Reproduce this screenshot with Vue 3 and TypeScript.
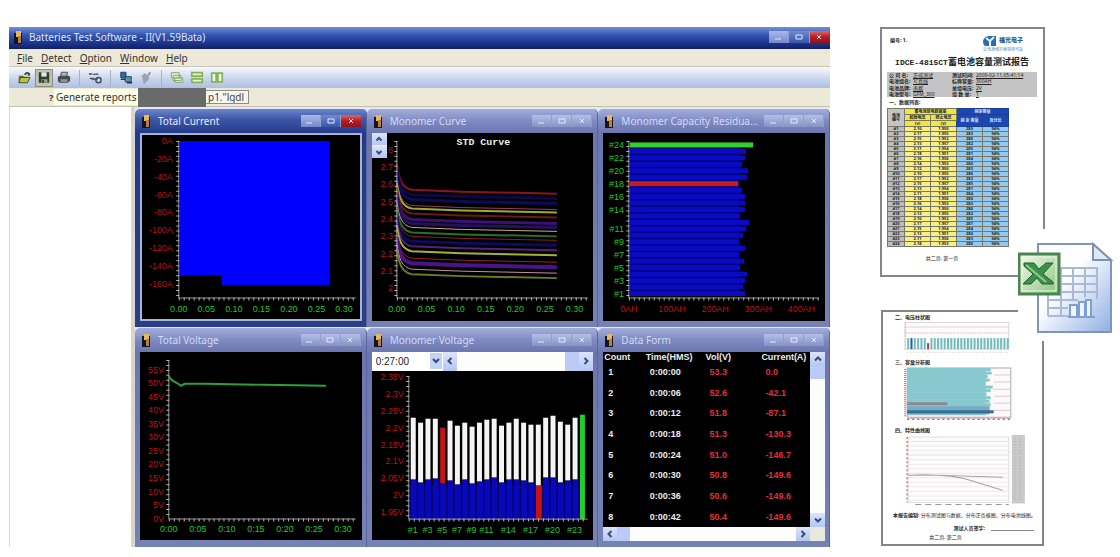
<script setup lang="ts">
import { ref } from 'vue'

type ChildWindow = { id: string; title: string; active?: boolean }

const menus = ['File', 'Detect', 'Option', 'Window', 'Help']

const windows: ChildWindow[] = [
  { id: 'current', title: 'Total Current', active: true },
  { id: 'curve', title: 'Monomer Curve' },
  { id: 'capacity', title: 'Monomer Capacity Residua...' },
  { id: 'total', title: 'Total Voltage' },
  { id: 'monomer', title: 'Monomer Voltage' },
  { id: 'data', title: 'Data Form' },
]

const fileName = ref('p1."lgdl')
const time = ref('0:27:00')

const hours = ['0.00', '0.05', '0.10', '0.15', '0.20', '0.25', '0.30']
const clock = ['0:00', '0:05', '0:10', '0:15', '0:20', '0:25', '0:30']
const amps = ['0A', '-20A', '-40A', '-60A', '-80A', '-100A', '-120A', '-140A', '-160A']
const cellVolts = ['2.8', '2.7', '2.6', '2.5', '2.4', '2.3', '2.2', '2.1', '2']
const totalVolts = ['55V', '50V', '45V', '40V', '35V', '30V', '25V', '20V', '15V', '10V', '5V', '0V']
const monoVolts = ['2.35V', '2.3V', '2.25V', '2.2V', '2.15V', '2.1V', '2.05V', '2V', '1.95V']

const curves = [
  { end: 61, color: '#8c1420', w: 2 },
  { end: 66, color: '#0c0848', w: 3 },
  { end: 71, color: '#0e0a58', w: 3 },
  { end: 77, color: '#93405a', w: 1 },
  { end: 80, color: '#a3a832', w: 2 },
  { end: 85, color: '#6c1a10', w: 2 },
  { end: 91, color: '#3b1272', w: 3 },
  { end: 95, color: '#26105e', w: 3 },
  { end: 99, color: '#c9a884', w: 1 },
  { end: 104, color: '#2c6f28', w: 2 },
  { end: 108, color: '#8a1c30', w: 1 },
  { end: 113, color: '#0e0a5c', w: 3 },
  { end: 118, color: '#572078', w: 2 },
  { end: 123, color: '#a4b03c', w: 2 },
  { end: 130, color: '#98203a', w: 1 },
  { end: 135, color: '#4a1488', w: 4 },
  { end: 141, color: '#c890a0', w: 1 },
  { end: 146, color: '#6c7c1c', w: 2 },
]
const curvePath = (e: number) => `M25 ${e - 30} C27 ${e - 14} 30 ${e - 6} 40 ${e - 4} L90 ${e - 2} L186 ${e}`

const capacity = [143, 141, 143, 145, 138, 142, 137, 143, 137, 141, 144, 147, 138, 143, 143, 143, 140, 136, 145, 146, 140, 143, 144, 151]
const capacityLabels = [24, 22, 20, 18, 16, 14, 11, 9, 7, 5, 3, 1]
const capacityY = (n: number) => 12 + (24 - n) * 6.5
const capacityColor = (n: number) => (n === 24 ? '#2fd02f' : n === 18 ? '#c41c24' : '#0a0ac4')

const tops = [47, 52, 48, 48, 57, 50, 55, 52, 56, 52, 49, 48, 55, 52, 48, 52, 54, 54, 47, 45, 51, 54, 47, 44]
const mids = [109, 112, 109, 108, 113, 110, 114, 109, 113, 111, 109, 107, 112, 109, 109, 110, 112, 115, 107, 107, 112, 110, 109, 149]
const barX = (i: number) => 39 + i * 7.4
const topColor = (i: number) => (i === 4 ? '#c41414' : i === 23 ? '#22d022' : '#f4f4f4')
const voltLabels = [1, 3, 5, 7, 9, 11, 14, 17, 20, 23]

const rows = [
  ['1', '0:00:00', '53.3', '0.0'],
  ['2', '0:00:06', '52.6', '-42.1'],
  ['3', '0:00:12', '51.8', '-87.1'],
  ['4', '0:00:18', '51.3', '-130.3'],
  ['5', '0:00:24', '51.0', '-146.7'],
  ['6', '0:00:30', '50.8', '-149.6'],
  ['7', '0:00:36', '50.6', '-149.6'],
  ['8', '0:00:42', '50.4', '-149.6'],
]

const meta = [
  ['公 司 名:', '正威测试', '测试时间:', '2009-02-11,05:41:14'],
  ['电池组名:', '写真线', '标称容量:', '300AH'],
  ['电池品牌:', '南都', '单组电压:', '2V'],
  ['电池型号:', 'GFM_300', '组 数 单:', '1'],
]
const reportRows = Array.from({ length: 24 }, (_, i) => [
  '#' + (i + 1),
  (2.1 + ((i * 7) % 9) / 100).toFixed(2),
  (1.95 + ((i * 5) % 8) / 1000).toFixed(3),
  String(280 + ((i * 3) % 7)),
  94 + ((i * 5) % 5) + '%',
])
const smallBars = Array.from({ length: 31 }, (_, i) => i)
const flatBars = [107, 108, 104, 106, 102, 109, 107, 103, 107, 106, 107, 104, 101]
</script>

<template>
  <main class="page">
    <section class="app">
      <header class="titlebar">
        <svg class="bat" viewBox="0 0 10 14"><rect x="1" y="3" width="8" height="11" fill="#15151f" /><rect x="3" y="1" width="5" height="6" fill="#e8b560" /><rect x="5" y="6" width="3" height="7" fill="#b8803c" /></svg>
        <h1>Batteries Test Software - II(V1.59Bata)</h1>
        <div class="winbtns hot">
          <button aria-label="Minimize"><svg viewBox="0 0 12 10"><path d="M2 7h6" /></svg></button>
          <button aria-label="Restore"><svg viewBox="0 0 12 10"><path d="M3 3h6v4H3z" /></svg></button>
          <button aria-label="Close" class="close"><svg viewBox="0 0 12 10"><path d="M4 3l4 4M8 3l-4 4" /></svg></button>
        </div>
      </header>
      <nav class="menubar">
        <button v-for="m in menus" :key="m"><u>{{ m[0] }}</u>{{ m.slice(1) }}</button>
      </nav>
      <div class="toolbar">
        <button aria-label="Open"><svg viewBox="0 0 16 14"><path d="M2 5h5l1 1h4v6H2z" fill="#6a7a20" /><path d="M4 7h11l-3 6H2z" fill="#b9c24a" stroke="#3c4a10" /><path d="M9 4c1-3 4-3 5-1l-1 2" fill="none" stroke="#28501c" stroke-width="2" /></svg></button>
        <button aria-label="Save" class="pressed"><svg viewBox="0 0 16 14"><path d="M2 1h12v12H2z" fill="#2f3f35" /><path d="M5 1h6v5H5z" fill="#e8ead8" /><path d="M5 9h7v4H5z" fill="#8fa08c" /><path d="M6 10h2v3H6z" fill="#222" /></svg></button>
        <button aria-label="Print"><svg viewBox="0 0 16 14"><path d="M5 1h7l-1 5H4z" fill="#aeb4b8" stroke="#444" /><path d="M1 6l3-1h9l2 1v5l-3 2H3l-2-2z" fill="#474b50" /><path d="M4 9h8v3H4z" fill="#8e949a" /></svg></button>
        <i class="sep" />
        <button aria-label="Settings"><svg viewBox="0 0 16 14"><path d="M1 3h4M6 4c2-2 4 0 6-1M2 8h5" fill="none" stroke="#4b4f5c" stroke-width="1.5" /><path d="M4 9h7" stroke="#48607c" stroke-width="2" /><circle cx="12" cy="10" r="3" fill="none" stroke="#3f4654" stroke-width="1.5" /></svg></button>
        <i class="sep" />
        <button aria-label="Download"><svg viewBox="0 0 16 14"><path d="M2 1h6v6H2z" fill="#2c6d9c" stroke="#1c3e64" /><path d="M7 6h7v6H7z" fill="#4f97a8" stroke="#1c3e64" /><path d="M2 9h5M9 13h6" stroke="#234" stroke-width="1.5" /></svg></button>
        <button aria-label="Connect"><svg viewBox="0 0 16 14"><path d="M3 5l4-3 5 5-3 5-4-1z" fill="#9aa2ac" /><path d="M10 5l3-4M5 12l2 1" stroke="#8891a0" stroke-width="2" /></svg></button>
        <i class="sep" />
        <button aria-label="Cascade"><svg viewBox="0 0 16 14" fill="#e6f0dc" stroke="#7aa35e"><path d="M1.500 1.500h9v6h-9zM3.500 4.500h9v6h-9zM5.500 7.500h9v5h-9z" /></svg></button>
        <button aria-label="Tile rows"><svg viewBox="0 0 16 14" fill="#e8f3da" stroke="#86b25a"><path d="M2 1.500h12v4H2zM2 8.500h12v4H2z" stroke-width="2" /></svg></button>
        <button aria-label="Tile columns"><svg viewBox="0 0 16 14" fill="#eef6e4" stroke="#86b25a"><path d="M2 2h5v10H2zM9 2h5v10H9z" stroke-width="2" /></svg></button>
      </div>
      <div class="infobar">
        <b>?</b><span class="tip">Generate reports</span><span class="mask" />
        <input v-model="fileName" aria-label="File" />
      </div>
      <div class="work">
        <aside class="tree" />
        <div class="mdi">
          <article v-for="w in windows" :key="w.id" class="child" :class="{ active: w.active }">
            <header>
              <svg class="bat" viewBox="0 0 10 14"><rect x="1" y="3" width="8" height="11" fill="#15151f" /><rect x="3" y="1" width="5" height="6" fill="#e8b560" /><rect x="5" y="6" width="3" height="7" fill="#b8803c" /></svg>
              <h2>{{ w.title }}</h2>
              <div class="winbtns" :class="{ hot: w.active }">
                <button aria-label="Minimize"><svg viewBox="0 0 12 10"><path d="M2 7h6" /></svg></button>
                <button aria-label="Maximize"><svg viewBox="0 0 12 10"><path d="M3 3h6v4H3z" /></svg></button>
                <button aria-label="Close" class="close"><svg viewBox="0 0 12 10"><path d="M4 3l4 4M8 3l-4 4" /></svg></button>
              </div>
            </header>
            <div class="body">
              <svg v-if="w.id === 'current'" class="chart" viewBox="0 0 223 189">
                <path d="M40 8H191V153H82V143H40z" fill="#0000ff" />
                <path d="M39 8V166H217" class="axis" /><path d="M38 8V166" class="ticks" /><path d="M39 167H217" class="ticks" />
                <g class="red end"><text v-for="(t, i) in amps" :key="t" x="33" :y="11 + i * 18">{{ t }}</text></g>
                <g class="green mid"><text v-for="(t, i) in hours" :key="t" :x="39 + i * 27.700" y="180">{{ t }}</text></g>
              </svg>

              <template v-else-if="w.id === 'curve'">
                <svg class="chart" viewBox="0 0 223 189">
                  <path v-for="c in curves" :key="c.end" :d="curvePath(c.end)" fill="none" :stroke="c.color" :stroke-width="c.w" />
                  <path d="M25 8V166H217" class="axis" /><path d="M24 8V166" class="ticks" /><path d="M25 167H217" class="ticks" />
                  <text x="112" y="12" class="charttitle">STD Curve</text>
                  <g class="red end"><text v-for="(t, i) in cellVolts" :key="t" x="21" :y="20 + i * 17.400">{{ t }}</text></g>
                  <g class="green mid"><text v-for="(t, i) in hours" :key="t" :x="25 + i * 29.800" y="180">{{ t }}</text></g>
                </svg>
                <div class="spin">
                  <button aria-label="Up"><svg viewBox="0 0 8 8"><path d="M1.500 5.500L4 3l2.500 2.500" /></svg></button>
                  <button aria-label="Down"><svg viewBox="0 0 8 8"><path d="M1.500 3L4 5.500 6.500 3" /></svg></button>
                </div>
              </template>

              <svg v-else-if="w.id === 'capacity'" class="chart" viewBox="0 0 223 189">
                <rect x="27" y="14" width="110" height="150" fill="#04047c" />
                <rect v-for="(c, i) in capacity" :key="i" x="27" :y="capacityY(i + 1) - 2.500" :width="c - 27" height="5" :fill="capacityColor(i + 1)" />
                <path d="M26 8V166H217" class="axis" /><path d="M25 8V166" class="ticks" /><path d="M26 167H217" class="ticks" />
                <g class="green end"><text v-for="n in capacityLabels" :key="n" x="21" :y="capacityY(n) + 3">#{{ n }}</text></g>
                <g class="red mid"><text v-for="n in 5" :key="n" :x="26 + (n - 1) * 43.400" y="180">{{ n > 1 ? (n - 1) * 100 : 0 }}AH</text></g>
              </svg>

              <svg v-else-if="w.id === 'total'" class="chart" viewBox="0 0 223 189">
                <path d="M29 8V168H217" class="axis" /><path d="M28 8V168" class="ticks" /><path d="M29 169H217" class="ticks" />
                <path d="M29 24C31 30 35 29 41 34L45 32H65L125 33L187 34" fill="none" stroke="#2f9f38" stroke-width="2" />
                <g class="red end"><text v-for="(t, i) in totalVolts" :key="t" x="24" :y="21 + i * 13.600">{{ t }}</text></g>
                <g class="green mid"><text v-for="(t, i) in clock" :key="t" :x="29 + i * 29.200" y="181">{{ t }}</text></g>
              </svg>

              <template v-else-if="w.id === 'monomer'">
                <div class="timebar">
                  <div class="timesel">
                    <select v-model="time" aria-label="Time"><option>0:27:00</option></select>
                    <svg viewBox="0 0 12 16"><path d="M3 6l3 3 3-3" /></svg>
                  </div>
                  <button class="sb" aria-label="Back"><svg viewBox="0 0 8 8"><path d="M5.500 1L2.500 4l3 3" /></svg></button>
                  <span class="track"><i class="thumb" /></span>
                  <button class="sb" aria-label="Forward"><svg viewBox="0 0 8 8"><path d="M2.500 1l3 3-3 3" /></svg></button>
                </div>
                <svg class="chart" viewBox="0 0 223 170">
                  <rect x="38" y="115" width="170" height="34" fill="#05056c" />
                  <g v-for="(t, i) in tops" :key="i">
                    <rect :x="barX(i)" :y="mids[i]" width="6" :height="149 - mids[i]" :fill="i === 17 ? '#c41414' : '#0808b8'" />
                    <rect :x="barX(i)" :y="t" width="5" :height="mids[i] - t" :fill="topColor(i)" />
                  </g>
                  <path d="M37 5V149H217" class="axis" /><path d="M36 5V149" class="ticks" /><path d="M37 150H217" class="ticks" />
                  <g class="red end"><text v-for="(v, i) in monoVolts" :key="v" x="32" :y="9 + i * 17">{{ v }}</text></g>
                  <g class="green mid"><text v-for="n in voltLabels" :key="n" :x="barX(n - 1) + 2" y="163">#{{ n }}</text></g>
                </svg>
              </template>

              <div v-else class="datagrid">
                <table>
                  <thead><tr><th>Count</th><th>Time(HMS)</th><th>Vol(V)</th><th>Current(A)</th></tr></thead>
                  <tbody><tr v-for="r in rows" :key="r[0]"><td v-for="(c, i) in r" :key="i">{{ c }}</td></tr></tbody>
                </table>
                <div class="vbar">
                  <button class="sb" aria-label="Scroll up"><svg viewBox="0 0 8 8"><path d="M1 5.500l3-3 3 3" /></svg></button>
                  <span class="track"><i class="thumb" /></span>
                  <button class="sb" aria-label="Scroll down"><svg viewBox="0 0 8 8"><path d="M1 2.500l3 3 3-3" /></svg></button>
                </div>
                <div class="hbar">
                  <button class="sb" aria-label="Scroll left"><svg viewBox="0 0 8 8"><path d="M5.500 1L2.500 4l3 3" /></svg></button>
                  <span class="track"><i class="thumb" /></span>
                  <button class="sb" aria-label="Scroll right"><svg viewBox="0 0 8 8"><path d="M2.500 1l3 3-3 3" /></svg></button>
                </div>
                <i class="corner" />
              </div>
            </div>
          </article>
        </div>
      </div>
    </section>

    <aside class="reports">
      <article class="sheet first">
        <div class="sheethead">
          <span>编号: 1.</span>
          <div class="brand">
            <svg viewBox="0 0 14 12"><path d="M0 6C1 2 4 1 7 1h6v10H3C1 11 0 9 0 6z" fill="#2a6cae" /><path d="M3 3l4 3 4-4M7 6v5" fill="none" stroke="#e8f4fc" stroke-width="2" /></svg>
            <b>福光电子</b>
            <small>让电源维护更简单可靠</small>
          </div>
        </div>
        <h3><span>IDCE-4815CT</span>蓄电池容量测试报告</h3>
        <dl>
          <template v-for="m in meta" :key="m[0]"><dt>{{ m[0] }}</dt><dd>{{ m[1] }}</dd><dt>{{ m[2] }}</dt><dd>{{ m[3] }}</dd></template>
        </dl>
        <h4>一、数据列表:</h4>
        <table>
          <thead>
            <tr><th rowspan="3">电池<br>编号</th><th colspan="2">蓄电池放电数据单</th><th colspan="2">剩余容量</th></tr>
            <tr><th>起始电压</th><th>终止电压</th><th rowspan="2">剩 余 容量</th><th rowspan="2">百分比</th></tr>
            <tr><th>(V)</th><th>(V)</th></tr>
          </thead>
          <tbody><tr v-for="r in reportRows" :key="r[0]"><td v-for="(c, i) in r" :key="i">{{ c }}</td></tr></tbody>
        </table>
        <p class="pageno">共二页, 第一页</p>
      </article>

      <svg class="excel" viewBox="0 0 102 112">
        <defs>
          <linearGradient id="paper" x1="0" y1="0" x2="1" y2="1"><stop offset="0.400" stop-color="#fdfeff" /><stop offset="1" stop-color="#8fb0e4" /></linearGradient>
          <linearGradient id="badge" x1="0" y1="0" x2="1" y2="1"><stop offset="0" stop-color="#f3faee" /><stop offset="1" stop-color="#8cc47c" /></linearGradient>
        </defs>
        <path d="M20 15H75L93 32V103H20z" fill="url(#paper)" stroke="#7f95bd" stroke-width="2" />
        <path d="M75 15V31H93z" fill="#dfe8f6" stroke="#7f8fae" stroke-width="2" />
        <path d="M30 39H79V70M30 47H79M30 55H79M30 63H79M30 71H60M30 79H50M30 87H52M30 39V87M43 39V87M55 39V71M67 39V68" fill="none" stroke="#a9b9d6" stroke-width="2" />
        <path d="M52 88V76h7v12M61 88V73h6v15M68 88V71h5v17M50 88h27" fill="#eef5ff" stroke="#7f9fd4" stroke-width="2" />
        <rect x="1" y="25" width="40" height="40" fill="url(#badge)" stroke="#4b8450" stroke-width="3" />
        <rect x="4" y="28" width="34" height="34" fill="none" stroke="#eaf6e4" />
        <path d="M6 34H16L21 40L28 34H35L25 45L35 53V55H24L19 49L13 55H5L15 45L6 37z" fill="#3b9148" stroke="#245c34" />
        <path d="M8 36l20 17" stroke="#90cc84" stroke-width="2" />
      </svg>

      <article class="sheet second">
        <h4>二、电压柱状图</h4>
        <svg viewBox="0 0 158 35">
          <path d="M22 0.500H125V27H22zM22 5H125" fill="#fdfcfc" stroke="#ddd5d8" /><path d="M22 11H125M22 1V28" stroke="#e9b6c0" fill="none" stroke-dasharray="2 1" />
          <rect v-for="i in smallBars" :key="i" :x="24 + i * 3.300" :y="i === 6 ? 21 : 16" width="2" :height="i === 6 ? 6 : 11" :fill="i === 6 ? '#b43850' : i === 1 ? '#2757a8' : '#74bcbc'" />
          <path d="M24 30H125" stroke="#bbb" stroke-dasharray="1 2" />
        </svg>
        <h4>三、容量分析图</h4>
        <svg viewBox="0 0 158 57">
          <path d="M24 1H127V50H24z" fill="#fdfafb" stroke="#aaa" /><path d="M110 8h17M110 15h17M110 22h17M110 29h17M110 36h17M110 43h17" stroke="#e4c8d0" />
          <rect x="24" y="2" width="78" height="46" fill="#92cdd2" />
          <rect v-for="(b, i) in flatBars" :key="i" x="24" :y="1 + i * 3.500" :width="b - 24" height="3" fill="#86c8ce" />
          <rect x="24" y="35" width="40" height="3" fill="#8b8b8f" /><rect x="24" y="39" width="82" height="8" fill="#76abc8" /><rect x="24" y="43" width="86" height="3" fill="#356f92" />
          <path d="M22 2V49" stroke="#d26a80" stroke-width="2" stroke-dasharray="1 1" /><path d="M24 51H127" stroke="#e2a8b4" /><path d="M24 52H129" stroke="#555" stroke-dasharray="2 3" />
        </svg>
        <h4>四、特性曲线图</h4>
        <svg viewBox="0 0 158 75">
          <path d="M25 2H125V67H25z" fill="#fdfcfc" stroke="#ddd" /><path v-for="n in 14" :key="n" :d="`M25 ${2 + n * 4.500}H125`" stroke="#efe6e8" />
          <path d="M25 40H55L119 42M25 40Q65 38 90 46T119 55" fill="none" stroke="#aaa0a4" /><path d="M24 2V67" stroke="#dc94a4" stroke-width="2" stroke-dasharray="2 2" /><path d="M32 69H125" stroke="#999" stroke-dasharray="6 4" />
          <rect x="128" width="13" height="68" fill="#c9c9c9" /><path d="M131 3V66M136 3V66" stroke="#aaa" stroke-dasharray="1 2" />
        </svg>
        <p class="note"><b>本报告编制:</b> 分布测试图与数据、分布正负极图、分布电池线图。</p>
        <p class="sign">测试人员签字: <i /></p>
        <p class="pageno">共二页, 第二页</p>
      </article>
    </aside>
  </main>
</template>

<style>
body { margin: 0; background: #fff; }
</style>

<style scoped>
* { box-sizing: border-box; }
button { padding: 0; border: 0; background: none; font: inherit; color: inherit; }
h1, h2, h3, h4, p, dl, dd { margin: 0; font-weight: normal; }
svg { display: block; }
.page { display: flex; align-items: flex-start; padding: 27px 0 8px 9px; font-family: "Noto Sans", "Noto Sans CJK SC", sans-serif; font-size: 10px; }
.app { flex: 1; min-width: 0; background: #ece9d8; }
.titlebar { display: flex; align-items: center; height: 22px; padding: 0 1px 2px 4px; gap: 6px; color: #dfe6f8; background: linear-gradient(#7391d6, #3656b4 35%, #213c96 65%, #101f66); }
.titlebar h1, .child h2 { flex: 1; min-width: 0; font-size: 10px; line-height: 16px; white-space: nowrap; }
.bat { width: 10px; height: 14px; flex: none; }
.winbtns { display: flex; flex: none; width: 60px; height: 12px; background: linear-gradient(#b4bfe6, #8691c6); }
.winbtns button { flex: 1; border-right: 1px solid #929ccd; }
.winbtns svg { width: 12px; height: 10px; margin: auto; fill: none; stroke: #e4e9fa; stroke-width: 1; }
.winbtns.hot { background: linear-gradient(#6f8ad0, #3655ac); }
.winbtns.hot button:first-child { background: linear-gradient(#a8b9e8, #7388cc); }
.winbtns.hot .close { background: linear-gradient(#d86a6a, #b81c20 50%, #8c1420); border: 0; }
.menubar { display: flex; gap: 8px; height: 17px; padding-left: 8px; color: #333; }
.toolbar { display: flex; align-items: center; height: 22px; padding: 0 7px; gap: 4px; border-top: 1px solid #c9c6ba; background: linear-gradient(#f8f9fb, #c6d3ec 60%, #aebfe2); }
.toolbar button { width: 16px; height: 16px; display: grid; place-items: center; }
.toolbar svg { width: 14px; height: 13px; }
.toolbar .pressed { background: #c2c4b0; box-shadow: 0 0 0 1px #8d8d7c; }
.sep { width: 1px; height: 16px; margin: 0 3px; background: #a6b2cc; }
.infobar { display: flex; align-items: center; height: 19px; padding-left: 40px; color: #333; border-bottom: 1px solid #c4c2ae; }
.infobar b { width: 5px; font-size: 9px; }
.tip { width: 84px; background: #fdfde8; line-height: 16px; padding-left: 2px; white-space: nowrap; }
.mask { width: 68px; height: 19px; background: #6a6a6a; }
.infobar input { width: 43px; height: 14px; border: 1px solid #8d8d84; border-left: 0; background: #f6f5ee; font: 10px "Noto Sans", sans-serif; color: #444; padding: 0 2px; }
.work { display: flex; }
.tree { width: 126px; flex: none; background: #fff; border: solid #d8d6cc; border-width: 0 4px 0 1px; }
.mdi { flex: 1; min-width: 0; display: grid; grid-template-columns: repeat(3, minmax(0, 1fr)); row-gap: 1px; padding-top: 2px; background: #e4e8f6; }
.child { padding: 0 4px 6px 5px; background: linear-gradient(#a3aedb, #7f8ac2 12px, #6b76ae 24px, #7681b4); border-radius: 5px 5px 0 0; border-right: 1px solid #5b6698; }
.child.active { background: linear-gradient(#6c85cc, #3e58a8 10px, #223a8a 24px, #2b3f88); }
.child header { display: flex; align-items: center; height: 24px; gap: 7px; color: #d3daf4; padding: 0 1px; }
.child.active header { color: #e6ebfa; }
.child h2 { overflow: hidden; margin-right: -6px; }
.body { position: relative; background: #000; }
.child.active .body { box-shadow: inset 0 0 0 2px #a9b4d4; }
.chart { width: 100%; height: auto; font: 9px "Liberation Sans", Arial, sans-serif; }
.axis { fill: none; stroke: #989898; stroke-width: 1; }
.ticks { fill: none; stroke: #b8b8b8; stroke-width: 3; stroke-dasharray: 1 4; }
.red { fill: #bd1018; }
.green { fill: #25c42c; }
.end { text-anchor: end; }
.mid { text-anchor: middle; }
.charttitle { fill: #eee; text-anchor: middle; font: bold 10px "Liberation Mono", monospace; }
.spin { position: absolute; left: 0; top: 0; width: 15px; display: grid; gap: 1px; background: #e7ecfa; }
.spin button, .sb { display: grid; place-items: center; background: linear-gradient(#dbe4fc, #b5c6f2); }
.spin button { height: 12px; }
.spin svg, .sb svg { width: 8px; height: 8px; fill: none; stroke: #3a4a7c; stroke-width: 2; }
.timebar { display: flex; height: 19px; background: #fff; }
.timesel { display: flex; align-items: center; width: 71px; flex: none; position: relative; }
.timesel select { width: 100%; height: 100%; appearance: none; border: 0; background: #fff; padding: 0 4px; font: 10px "Liberation Sans", Arial, sans-serif; color: #222; }
.timesel svg { position: absolute; right: 1px; top: 1px; width: 12px; height: 16px; background: #c4d2f6; fill: none; stroke: #3a4a7c; stroke-width: 2; pointer-events: none; }
.sb { width: 14px; flex: none; }
.track { flex: 1; display: flex; background: #fdfdfb; }
.thumb { display: block; background: #bccbf5; }
.timebar .track { justify-content: flex-end; }
.timebar .thumb { width: 14px; }
.datagrid { display: grid; grid-template-columns: minmax(0, 1fr) 15px; grid-template-rows: 175px 14px; }
.datagrid table { width: 100%; height: 100%; table-layout: fixed; border-collapse: collapse; color: #eee; font: bold 9px "Liberation Sans", Arial, sans-serif; }
.datagrid th, .datagrid td { padding: 0 0 0 5px; text-align: left; white-space: nowrap; }
.datagrid th { padding-left: 1px; font-size: 9px; }
.datagrid th:nth-child(1) { width: 20%; }
.datagrid th:nth-child(2) { width: 29%; }
.datagrid th:nth-child(3) { width: 27%; }
.datagrid td:nth-child(n + 3) { color: #e0303c; }
.vbar { display: flex; flex-direction: column; }
.vbar .sb { width: 15px; height: 14px; }
.vbar .thumb { width: 15px; height: 13px; }
.hbar { display: flex; }
.hbar .thumb { width: 13px; }
.corner { background: #e8e8dc; }
.reports { position: relative; width: 290px; flex: none; padding-left: 50px; color: #222; }
.sheet { width: 165px; border: 2px solid #858585; background: #fff; font-size: 5px; line-height: 6px; }
.first { height: 250px; padding: 3px 6px 0 5px; }
.second { width: 163px; height: 236px; margin: 33px 0 0 1px; }
.sheethead { display: flex; justify-content: space-between; height: 24px; padding: 3px 14px 0 3px; font-weight: bold; }
.sheethead span { padding-top: 2px; }
.brand { display: grid; grid-template-columns: 14px auto; column-gap: 2px; align-content: start; }
.brand svg { width: 14px; height: 12px; }
.brand b { font-size: 6px; line-height: 10px; color: #285c94; }
.brand small { grid-column: 1 / 3; font-size: 4px; line-height: 5px; color: #6287b4; font-weight: normal; }
h3 { font-weight: bold; font-size: 9px; line-height: 12px; text-align: center; white-space: nowrap; }
h3 span { font: bold 8px "Liberation Mono", monospace; }
dl { display: grid; grid-template-columns: 24px 39px 24px 1fr; height: 25px; margin-top: 4px; padding: 0 0 0 2px; background: #c4c4c4; font-weight: bold; white-space: nowrap; }
dd { text-decoration: underline; font-size: 5px; }
h4 { font-weight: bold; font-size: 5px; line-height: 10px; padding-left: 12px; }
.first h4 { padding-left: 2px; line-height: 11px; }
.first table { width: 122px; table-layout: fixed; border-collapse: collapse; font-size: 4px; line-height: 4px; font-weight: bold; border: 1px solid #555; }
.first th, .first td { padding: 0; height: 5px; border: 1px solid #77776c; text-align: center; overflow: hidden; white-space: nowrap; }
.first th { height: 6px; font-size: 4px; }
.first thead tr:first-child th:nth-child(1) { width: 17px; background: #c4c4c4; }
.first th { background: #f2e63c; }
.first thead tr:first-child th:nth-child(3), .first thead tr:nth-child(2) th:nth-child(n + 3) { background: #1c48b4; color: #dbe8ff; border-color: #1c3f96; }
.first td:nth-child(1) { width: 17px; background: #bcbcbc; }
.first td:nth-child(2), .first td:nth-child(3) { background: #f7ef86; }
.first td:nth-child(n + 4) { background: #93c9ee; }
.pageno { text-align: center; padding-right: 34px; }
.first .pageno { padding: 8px 40px 0 0; }
.excel { position: absolute; left: 188px; top: 202px; width: 102px; height: 112px; background: #fff; }
.second svg { width: 100%; height: auto; }
.second .note { padding-left: 10px; line-height: 10px; white-space: nowrap; }
.sign { display: flex; justify-content: flex-end; align-items: flex-end; gap: 6px; padding: 5px 8px 3px 0; font-weight: bold; }
.sign i { width: 43px; border-bottom: 1px solid #888; }
</style>
